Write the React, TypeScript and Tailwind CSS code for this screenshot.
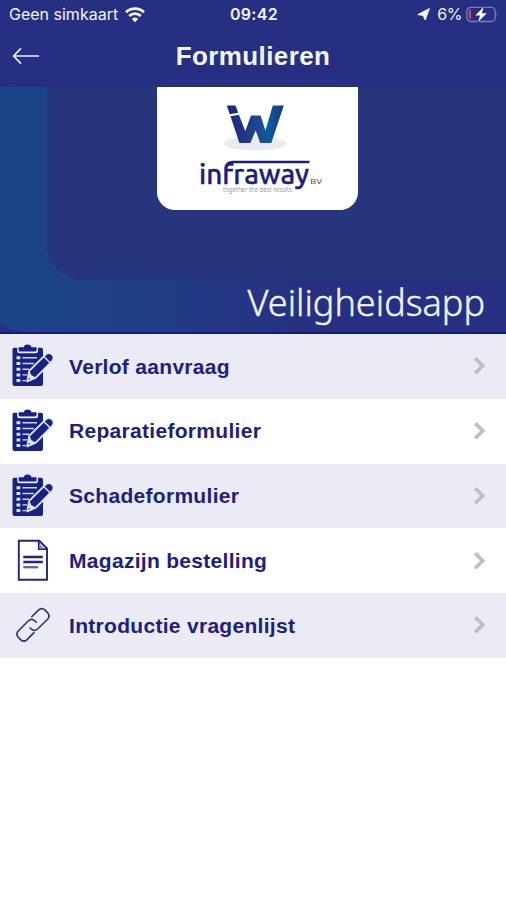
import type { ComponentType } from 'react'
import { clsx } from 'clsx'

function WifiIcon() {
  return (
    <svg width="20" height="16" viewBox="0 0 20 16" fill="none" stroke="#f3f5fd" strokeWidth="2.7">
      <path d="M1 5.3 A13 13 0 0 1 19 5.3" />
      <path d="M4.2 9 A8.4 8.4 0 0 1 15.8 9" />
      <path d="M10 15.2 L6.9 12 A4.5 4.5 0 0 1 13.1 12 Z" fill="#f3f5fd" stroke="none" />
    </svg>
  )
}

function LocationIcon() {
  return (
    <svg width="13" height="13" viewBox="0 0 13 13" fill="#f3f5fd" stroke="#f3f5fd" strokeWidth="1" strokeLinejoin="round">
      <path d="M12.4 .6 L8.2 12 L6.2 7.4 L.9 6.6 Z" />
    </svg>
  )
}

function BatteryIcon() {
  return (
    <svg width="33" height="17" viewBox="0 0 33 17">
      <rect x="0.8" y="1.3" width="28.4" height="14.2" rx="4" fill="none" stroke="#7a80b5" strokeWidth="1.3" />
      <path d="M30.8 6 Q32.6 8.4 30.8 11 Z" fill="#7a80b5" />
      <path d="M5 3.6 V13.2 H4.4 Q2.8 13.2 2.8 11.4 V5.4 Q2.8 3.6 4.4 3.6 Z" fill="#e0404f" />
      <path
        d="M17.8 .8 L9.3 9.4 H14 L12 16 L20.8 7.3 H15.8 Z"
        fill="#fff"
        stroke="#272f82"
        strokeWidth="1.4"
        paintOrder="stroke"
      />
    </svg>
  )
}

function BackArrow() {
  return (
    <svg width="28" height="18" viewBox="0 0 28 18" fill="none" stroke="#eef1fc" strokeWidth="1.7" strokeLinecap="round" strokeLinejoin="round">
      <path d="M26.3 9 H1.5 M8.5 1.8 L1.5 9 L8.5 16.2" />
    </svg>
  )
}

function ClipboardIcon() {
  return (
    <svg width="42" height="44" viewBox="0 0 42 44">
      <path
        d="M2 3.8 H5.2 V7 Q5.2 9.2 7.4 9.2 H23.8 Q26 9.2 26 7 V3.8 H29.2 Q31 3.8 31 5.6 V40 Q31 42 29 42 H2.5 Q.5 42 .5 40 V5.6 Q.5 3.8 2 3.8 Z"
        fill="#182286"
      />
      <path d="M6.6 3.2 H11.8 Q12.2 .4 15.6 .4 Q19 .4 19.4 3.2 H24.6 V6 Q24.6 7.6 23 7.6 H8.2 Q6.6 7.6 6.6 6 Z" fill="#182286" />
      <path
        d="M4.5 12.3 H8.3 V15.3 H4.5 Z M4.5 18 H8.3 V21 H4.5 Z M4.5 23.7 H8.3 V26.7 H4.5 Z M4.5 29.4 H8.3 V32.4 H4.5 Z M4.5 35.1 H8.3 V38.1 H4.5 Z"
        fill="#e1e4f4"
      />
      <path
        d="M10.5 13.8 H25 M10.5 19.5 H22 M10.5 25.2 H17 M10.5 30.9 H15 M10.5 36.6 H14"
        fill="none"
        stroke="#d2d6ec"
        strokeWidth="1.4"
      />
      <path
        d="M15.2 37.4 L17.2 26.8 L33.8 10.3 Q37 7.6 40.2 10.6 Q43 13.8 40.3 17 L23.8 33.6 Z"
        fill="#182286"
        stroke="#e6e9f6"
        strokeWidth="1.8"
        strokeLinejoin="round"
      />
      <path d="M31.8 12.4 L38 18.8" fill="none" stroke="#e6e9f6" strokeWidth="1.4" />
      <path d="M17.9 27.8 L19.4 31.3 L23 32.9 L18.8 35.4 L16.7 33.4 Z" fill="#e6e9f6" />
    </svg>
  )
}

function DocumentIcon() {
  return (
    <svg width="42" height="44" viewBox="0 0 42 44" fill="none" stroke="#20267f" strokeWidth="1.9">
      <path d="M6.8 1.8 H27.3 L35 9.5 V40.8 H6.8 Z" />
      <path d="M26.8 2.1 V10.1 H34.8" />
      <path d="M27.5 4.5 L32.5 9.5 H27.5 Z" fill="#8b8fc0" stroke="none" />
      <path d="M11.3 18 H30.8 M11.3 23 H30.8" strokeWidth="2.3" />
      <path d="M11.3 28.2 H26" stroke="#6064a4" strokeWidth="2.3" />
    </svg>
  )
}

function LinkIcon() {
  return (
    <svg width="42" height="44" viewBox="0 0 42 44" fill="none" stroke="#2a307f" strokeWidth="1.6" strokeLinecap="round">
      <path d="M19.8 13.7 L26.4 7.1 Q29.6 4.2 32.8 6.9 L35.8 9.9 Q38.4 13 35.6 16.2 L25.6 26 Q22.4 28.8 19.4 26.2 L18 24.8" />
      <path d="M24.2 19.2 L22.8 17.8 Q19.6 15 16.4 17.8 L6.2 28 Q3.6 31 6.2 34.2 L8.8 36.8 Q11.8 39.4 14.8 36.8 L22 29.6" />
    </svg>
  )
}

function ChevronIcon() {
  return (
    <svg width="14" height="20" viewBox="0 0 14 20" fill="none" stroke="#bfbfc3" strokeWidth="3.6">
      <path d="M2.2 2.4 L9.8 9.8 L2.2 17.2" />
    </svg>
  )
}

function InfrawayLogo() {
  return (
    <svg width="201" height="123" viewBox="0 0 201 123">
      <defs>
        <linearGradient id="mark" x1="0" x2="1">
          <stop offset="0" stopColor="#20247a" />
          <stop offset="0.6" stopColor="#1d4a92" />
          <stop offset="0.72" stopColor="#0a5e9f" />
          <stop offset="1" stopColor="#252f7d" />
        </linearGradient>
      </defs>
      <ellipse cx="98" cy="56.5" rx="31" ry="7" fill="#ebebed" />
      <path
        fill="url(#mark)"
        d="M69.7 18.6 H78.6 L81.2 25.8 L72.8 27.2 Z M73.5 29.2 L81.9 27.8 L88.3 44 L94 28.5 H103.6 L108.4 43.5 L115.8 18.6 H126.8 L114.3 56 H103.2 L98.7 43.5 L93.4 56 H82.4 Z"
      />
      <text
        x="42"
        y="96.5"
        fontFamily="Ubuntu, 'Noto Sans', sans-serif"
        fontSize="28"
        fontWeight="500"
        fill="#1b1f7c"
        stroke="#1b1f7c"
        strokeWidth="0.4"
        textLength="110"
        lengthAdjust="spacingAndGlyphs"
      >
        infraway
      </text>
      <path d="M69.5 80 Q70 75 76 75 H152.5" fill="none" stroke="#1b1f7c" strokeWidth="2.7" />
      <text x="153" y="97" fontFamily="'Noto Sans', sans-serif" fontSize="7" fill="#55555f" textLength="12" lengthAdjust="spacingAndGlyphs">
        BV
      </text>
      <text x="66" y="105.2" fontFamily="'Noto Sans', sans-serif" fontSize="6.4" fill="#9a9aa3" textLength="69" lengthAdjust="spacingAndGlyphs">
        together the best results
      </text>
    </svg>
  )
}

interface MenuItem {
  label: string
  icon: ComponentType
}

const items: MenuItem[] = [
  { label: 'Verlof aanvraag', icon: ClipboardIcon },
  { label: 'Reparatieformulier', icon: ClipboardIcon },
  { label: 'Schadeformulier', icon: ClipboardIcon },
  { label: 'Magazijn bestelling', icon: DocumentIcon },
  { label: 'Introductie vragenlijst', icon: LinkIcon },
]

export default function App() {
  return (
    <div className="h-[900px] w-[506px] overflow-hidden bg-white font-['Liberation_Sans',sans-serif]">
      <header className="h-[87px] bg-[#272f82] text-[#f3f5fd]">
        <div className="grid h-[29px] grid-cols-3 items-center pr-[7px] pl-[9px] font-['Inter',sans-serif] text-[16px]">
          <div className="flex items-center gap-[7px] whitespace-nowrap">
            <span className="pb-0.5">Geen simkaart</span>
            <WifiIcon />
          </div>
          <span className="pb-0.5 text-center font-semibold tracking-[0.3px]">09:42</span>
          <div className="flex items-center justify-end">
            <LocationIcon />
            <span className="mr-1 ml-[7px] pb-0.5 tracking-[-0.4px]">6%</span>
            <BatteryIcon />
          </div>
        </div>
        <div className="grid h-[54px] grid-cols-[60px_1fr_60px] items-center">
          <button className="pl-3" aria-label="Terug">
            <BackArrow />
          </button>
          <h1 className="text-center text-[26px] font-bold tracking-[0.4px]">Formulieren</h1>
        </div>
      </header>

      <section className="h-[247px] border-b-2 border-[#151c7c] bg-[#272f82]">
        <div className="-ml-5 flex h-full flex-col rounded-bl-[48px] bg-linear-to-r from-[#1a4689] from-5% via-[#203d85] via-30% to-[#272f82] to-65% pl-[67px]">
          <div className="h-[193px] rounded-bl-[36px] bg-[#27357c] pl-[110px]">
            <div className="h-[123px] w-[201px] overflow-hidden rounded-b-[18px] bg-white">
              <InfrawayLogo />
            </div>
          </div>
          <p className="pr-[21px] text-right font-['Noto_Sans',sans-serif] text-[36px] leading-[46px] font-light text-[#f0f5ff] [-webkit-text-stroke:0.4px_#f0f5ff]">
            Veiligheidsapp
          </p>
        </div>
      </section>

      <ul>
        {items.map((item, i) => (
          <li
            key={item.label}
            className={clsx('flex h-[64.75px] items-center pr-[19px] pl-3', i % 2 === 0 ? 'bg-[#eaebf4]' : 'bg-white')}
          >
            <item.icon />
            <span className="ml-[15px] flex-1 text-[21px] font-bold tracking-[0.3px] text-[#1c2180]">{item.label}</span>
            <ChevronIcon />
          </li>
        ))}
      </ul>
    </div>
  )
}
